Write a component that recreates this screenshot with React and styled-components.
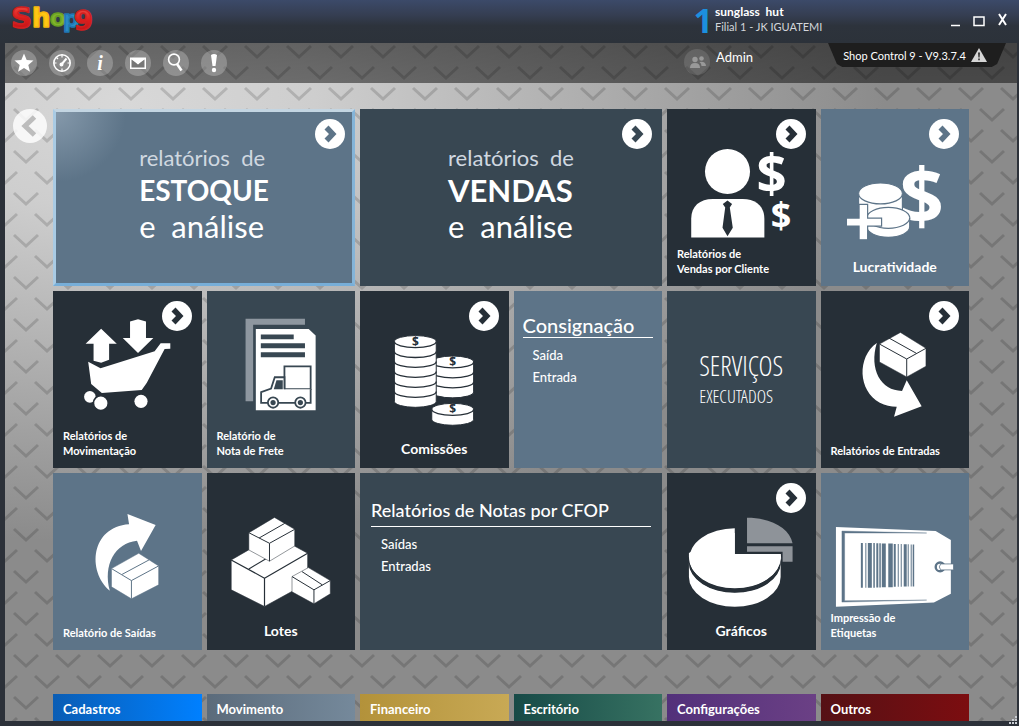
import React from "react";
import styled, { createGlobalStyle, css } from "styled-components";

const GlobalStyle = createGlobalStyle`
  * {
    box-sizing: border-box;
  }

  body {
    margin: 0;
    font-family: Lato, "Open Sans", sans-serif;
    font-size: 13px;
    color: #fff;
    background: #2c3139;
  }

  a {
    color: inherit;
    text-decoration: none;
  }

  button {
    font: inherit;
    color: inherit;
    border: 0;
    padding: 0;
    background: none;
    cursor: pointer;
  }
`;

const tones = {
  dark: "#262f37",
  slate: "#384752",
  blue: "#5d7488",
};

const Window = styled.div`
  position: relative;
  display: flex;
  flex-direction: column;
  min-height: 100vh;
  padding: 0 2px 5px 5px;
  background: #2c3139;
`;

const TitleBar = styled.header`
  display: flex;
  align-items: flex-start;
  height: 43px;
  margin: 0 -2px 0 -5px;
  padding: 4px 12px 0 10px;
  background: linear-gradient(#3c4a69, #353e52 35%, #2d333c 60%, #2c323a);
`;

const Logo = styled.a`
  flex: 1;
  height: 36px;

  svg {
    display: block;
    overflow: visible;
  }
`;

const Branch = styled.div`
  display: flex;
  width: 258px;
  gap: 2px;
`;

const BranchNumber = styled.span`
  width: 20px;
  font: bold 34px/32px "Open Sans", sans-serif;
  text-align: right;
  color: #1c8fdf;
`;

const BranchText = styled.div`
  font-size: 12px;
  line-height: 15px;
  white-space: pre;

  strong {
    display: block;
  }

  span {
    font-size: 11px;
    color: #d3d6db;
  }
`;

const WindowButtons = styled.div`
  display: flex;
  align-items: center;
  gap: 13px;
  height: 34px;
`;

const Desktop = styled.div`
  position: relative;
  flex: 1;
  display: flex;
  flex-direction: column;
  background: radial-gradient(
    760px 440px at 120px 60px,
    #d8d8d8,
    #cecece 25%,
    #a6a6a6 70%,
    #8b8b8b
  );
`;

const Chevrons = styled.svg`
  position: absolute;
  inset: 0;
  width: 100%;
  height: 100%;
`;

const Toolbar = styled.nav`
  position: relative;
  display: flex;
  height: 40px;
  padding-left: 6px;
  background: linear-gradient(rgba(0, 0, 0, 0.52), rgba(0, 0, 0, 0.48));
`;

const Tools = styled.div`
  flex: 1;
  display: flex;
  align-items: center;
  gap: 12px;
`;

const RoundButton = styled.button`
  width: 26px;
  height: 26px;
  border-radius: 50%;
  background: rgba(255, 255, 255, 0.24);

  svg {
    display: block;
  }
`;

const User = styled.div`
  display: flex;
  gap: 6px;
  width: 144px;
  padding-top: 6px;
  line-height: 16px;

  ${RoundButton} {
    background: rgba(255, 255, 255, 0.12);
  }
`;

const Version = styled.div`
  display: flex;
  align-items: center;
  justify-content: center;
  gap: 5px;
  width: 178px;
  height: 24px;
  margin-right: 11px;
  padding-right: 4px;
  font-size: 11px;
  background: #1e1e1e;
  clip-path: polygon(0 0, 100% 0, 95% 88%, 92% 100%, 8% 100%, 5% 88%);
`;

const Main = styled.main`
  position: relative;
  flex: 1;
  display: grid;
  grid-template-columns: 48px 1fr 48px;
  padding-top: 26px;
`;

const BackButton = styled.button`
  width: 34px;
  height: 34px;
  margin-left: 8px;
  border-radius: 50%;
  background: rgba(255, 255, 255, 0.82);

  svg {
    display: block;
  }
`;

const Content = styled.div`
  display: flex;
  flex-direction: column;
  justify-content: space-between;
  gap: 24px;
`;

const Grid = styled.div`
  display: grid;
  grid-template-columns: repeat(6, 1fr);
  grid-auto-rows: 177px;
  gap: 5px;
`;

const Tile = styled.section`
  position: relative;
  display: flex;
  flex-direction: column;
  grid-column: span ${(p) => p.$span || 1};
  color: ${(p) => tones[p.$tone]};
  background: ${(p) => tones[p.$tone]};

  ${(p) =>
    p.$selected &&
    css`
      border: 3px solid #77aed8;
      border-color: #c3d5e2 #84b4d8 #77aed8 #a9cbe4;
      background: radial-gradient(circle at 0 0, #8599ab, ${tones.blue} 70px);
    `}
`;

const NextButton = styled.button`
  position: absolute;
  top: ${(p) => (p.$inset ? 7 : 10)}px;
  right: ${(p) => (p.$inset ? 7 : 10)}px;
  width: 30px;
  height: 30px;
  border-radius: 50%;
  background: #fff;

  svg {
    display: block;
  }
`;

const Art = styled.svg`
  display: block;
  width: 100%;
  height: 137px;
  fill: #fff;
`;

const Label = styled.a`
  margin-top: auto;
  padding: 0 10px 10px;
  font-size: 11px;
  font-weight: bold;
  line-height: 15px;
  white-space: pre-line;
  color: #fff;

  ${(p) =>
    p.$big &&
    css`
      padding-bottom: 12px;
      font-size: 14px;
      text-align: center;
    `}
`;

const Headline = styled.a`
  align-self: center;
  margin: auto;
  padding-bottom: 8px;
  color: #fff;
  white-space: pre;

  span,
  strong {
    display: block;
    font-size: 31px;
    line-height: 37px;
  }

  strong {
    font-size: ${(p) => (p.$long ? 28 : 31)}px;
    line-height: 35px;
  }

  span:first-child {
    font-size: 22px;
    line-height: 30px;
    color: #d0d8e0;
  }
`;

const ListTile = styled.div`
  padding: ${(p) => (p.$wide ? "25px 11px" : "22px 9px")};
  color: #fff;

  h2 {
    margin: 0 0 6px;
    padding-bottom: ${(p) => (p.$wide ? 4 : 0)}px;
    font-size: ${(p) => (p.$wide ? 18 : 20)}px;
    font-weight: 500;
    line-height: 24px;
    border-bottom: 1px solid #fff;
  }

  ul {
    margin: 0;
    padding: 0 0 0 10px;
    list-style: none;
  }

  li {
    font-size: 13px;
    font-weight: 500;
    line-height: 22px;
  }
`;

const Services = styled.a`
  margin: auto;
  font-family: "Open Sans Condensed Light", "Open Sans Condensed",
    "Liberation Sans Narrow", "DejaVu Sans Condensed", sans-serif;
  font-weight: 300;
  color: #fff;

  span {
    display: block;
    font-size: 27px;
    line-height: 32px;
  }

  span + span {
    font-size: 18px;
    line-height: 28px;
  }
`;

const Menu = styled.nav`
  display: grid;
  grid-template-columns: repeat(6, 1fr);
  gap: 5px;
`;

const MenuItem = styled.a`
  height: 27px;
  padding-left: 10px;
  font-size: 13px;
  font-weight: bold;
  line-height: 30px;
  background: linear-gradient(90deg, ${(p) => p.$from}, ${(p) => p.$to});
`;

const Grip = styled.svg`
  position: absolute;
  right: 1px;
  bottom: 1px;
  fill: #c8ccd2;
`;

function Arrow({ inset, label }) {
  return (
    <NextButton $inset={inset} aria-label={label}>
      <svg width="30" height="30" viewBox="0 0 30 30">
        <path d="M9.5 10.5 L13.5 6.5 L21.5 15 L13.5 23.5 L9.5 19.5 L14 15Z" fill="currentColor" />
      </svg>
    </NextButton>
  );
}

// lid corners, then the three lower corners from left to right
function Box({ top, right, front, left, base, tape, width = 1 }) {
  const p = (pt) => pt.join(" ");
  return (
    <g fill="#fff" stroke="currentColor" strokeWidth={width} strokeLinejoin="round">
      <path d={`M${p(top)}L${p(right)}L${p(base[2])}L${p(base[1])}L${p(base[0])}L${p(left)}Z`} strokeWidth={width / 2} />
      <path d={`M${p(left)}L${p(front)}L${p(right)}M${p(front)}L${p(base[1])}`} fill="none" />
      <path d={`M${p(tape[0])}L${p(tape[1])}`} />
    </g>
  );
}

function Stack({ x, y, coins }) {
  const rx = 21;
  const ry = 6;
  const step = 10;
  const seams = Array.from({ length: coins }, (_, i) => y + i * step);
  return (
    <g>
      <path
        d={`M${x - rx} ${y} A${rx} ${ry} 0 0 1 ${x + rx} ${y} V${y + coins * step} A${rx} ${ry} 0 0 1 ${x - rx} ${y + coins * step}Z`}
        stroke="currentColor"
        strokeWidth="1"
      />
      {seams.map((s) => (
        <path key={s} d={`M${x - rx} ${s} A${rx} ${ry} 0 0 0 ${x + rx} ${s}`} fill="none" stroke="currentColor" strokeWidth="1.3" />
      ))}
      <text x={x} y={y + 4} textAnchor="middle" fontFamily="Open Sans" fontWeight="bold" fontSize="12" fill="currentColor">
        $
      </text>
    </g>
  );
}

function Dollar({ x, y, size }) {
  return (
    <text x={x} y={y} textAnchor="middle" fontFamily="Open Sans" fontWeight="bold" fontSize={size}>
      $
    </text>
  );
}

const art = {
  client: (
    <>
      <circle cx="60.7" cy="62.5" r="22.6" />
      <path d="M24.3 128.7 V110 C24.3 97 33 90 46 90 H76 C89 90 97.7 97 97.7 110 V128.7Z" />
      <path d="M60.7 91.5 L65.3 95 L63 98.6 L66 119 L60.7 127.5 L55.7 119 L58.4 98.6 L56 95Z" fill="currentColor" />
      <Dollar x={105} y={84} size={53} />
      <Dollar x={114.3} y={119} size={36} />
    </>
  ),
  profit: (
    <>
      <Dollar x={101} y={115} size={78} />
      <g stroke="currentColor" strokeWidth="1.2">
        <path d="M37.7 84.5 A22 10.5 0 0 1 81.7 84.5 V100 A22 10.5 0 0 1 37.7 100Z" />
        <path d="M37.7 84.5 A22 10.5 0 0 0 81.7 84.5" />
        <path d="M46 109 A21.5 10.5 0 0 1 89 109 V118 A21.5 10.5 0 0 1 46 118Z" />
        <path d="M46 109 A21.5 10.5 0 0 0 89 109" />
        <path d="M38.2 95.500 H46.8 V109.2 H60.8 V117.2 H46.8 V131 H38.2 V117.2 H25.500 V109.2 H38.2Z" />
      </g>
    </>
  ),
  cart: (
    <>
      <path d="M48.3 37.7 L64 52.7 H56.3 V68.7 L48.3 71.7 L40.7 69.7 V52.7 H32.7Z" />
      <path d="M85.3 28 L93.3 30.3 V47 H100.7 L85.3 62 L70 47 H77.3 V30.3Z" />
      <path d="M35.3 70.7 L47.7 77.3 L102 60.3 L108 52.3 H117.7 V57.7 L112 58 L94 92 L89 99 L49 102 L38.3 93Z" />
      <circle cx="37" cy="106" r="5.8" />
      <circle cx="48" cy="112.3" r="7.4" stroke="currentColor" strokeWidth="1.6" />
      <circle cx="88.3" cy="110.5" r="6.6" />
    </>
  ),
  freight: (
    <>
      <path d="M38.7 27.7 H98.3 V33.7 H46.3 V110.3 H38.7Z" fill="#8e97a0" />
      <path d="M49 38 H102 L109 44.5 V119.3 H49Z" />
      <path d="M54 43.3h33v5h-33z M54 52.3h44.3v5h-44.3z M54 61.2h44.3v5h-44.3z" fill="currentColor" />
      <g stroke="currentColor" strokeWidth="1.8">
        <path d="M77.7 75.3 H104 V98.3 H77.7Z" />
        <path d="M77.7 98.3 V86.3 H68 L64.3 97.7 L54.3 101.3 V112 H104 V98.3" />
        <circle cx="66.3" cy="111.7" r="5.2" />
        <circle cx="93.7" cy="111.7" r="5.2" />
      </g>
      <path d="M69.7 89.3 H76 V98.3 H67Z" fill="currentColor" />
      <circle cx="66.3" cy="111.7" r="2.6" fill="currentColor" />
      <circle cx="93.7" cy="111.7" r="2.6" fill="currentColor" />
    </>
  ),
  coins: (
    <>
      <Stack x={93} y={71} coins={3} />
      <Stack x={55.5} y={50.5} coins={6} />
      <Stack x={93} y={118.5} coins={1} />
    </>
  ),
  inbound: (
    <>
      <path d="M56 52 C36 66 37 100 59 112 Q67 116 76 116 L73.3 126 L101 115.3 L86 89.3 L81.3 100 C60 100 48 78 56 52Z" />
      <Box
        top={[79.7, 41.3]}
        right={[105.3, 57.3]}
        front={[86, 68]}
        left={[58.7, 53]}
        base={[[58.7, 71], [86, 86], [105.3, 75.3]]}
        tape={[[68.3, 47], [95.7, 62.3]]}
      />
    </>
  ),
  outbound: (
    <>
      <path d="M57 118 C34 98 38 54 76.3 51.3 L74.7 41 L103 52 L88.3 78 L84.3 67.7 C62 70 50 92 57 118Z" />
      <Box
        top={[86, 80.3]}
        right={[106, 93]}
        front={[78.7, 107.7]}
        left={[58.7, 95.7]}
        base={[[58.7, 114], [78.7, 126], [106, 112]]}
        tape={[[69.3, 101.5], [96.3, 87]]}
      />
    </>
  ),
  lots: (
    <>
      <Box
        top={[67.6, 62]}
        right={[101, 80.3]}
        front={[57.7, 105.3]}
        left={[24.3, 87]}
        base={[[24.3, 117], [57.7, 133.7], [101, 110]]}
        tape={[[42, 96], [84, 71]]}
        width={1.2}
      />
      <Box
        top={[67.7, 44.3]}
        right={[88, 56.3]}
        front={[62.7, 70.3]}
        left={[42, 59.7]}
        base={[[42, 77], [62.7, 88.3], [88, 73]]}
        tape={[[52.3, 65], [78, 50.3]]}
      />
      <Box
        top={[101.7, 94.7]}
        right={[123.7, 107.7]}
        front={[107.3, 117]}
        left={[85.3, 103.7]}
        base={[[85.3, 119], [107.3, 131], [123.7, 121]]}
        tape={[[95.3, 98.7], [115.7, 112]]}
      />
    </>
  ),
  pie: (
    <>
      <path d="M68 55.3 A46 30 0 1 0 114 81 H68Z" />
      <path d="M22 90 A46 30 0 0 0 114 90 V104 A46 30 0 0 1 22 104Z" />
      <path d="M22 85 A46 30 0 0 0 114 85 V89 A46 30.5 0 0 1 22 89Z" fill="currentColor" />
      <path d="M22 84 A46 31.5 0 0 0 114 84 V81 H68 V60 H60 L22 80Z" />
      <path d="M80.3 44.7 C104 44.7 123 55 126 70.3 H80.3Z M80.3 73.3 H126 V88.7 H116 V78.7 H80.3Z" fill="#8e9399" />
    </>
  ),
  tag: (
    <>
      <path d="M15 54 L115 58 L130.3 67 V121 L113.3 129.7 L15 134Z" />
      <path d="M21 58 L106 60 L23.7 60 V128 L106 127.3 L21 129.3Z" fill="currentColor" stroke="currentColor" strokeWidth="0.4" />
      <path
        d="M40 70h2v45h-2z M44.5 70h1v45h-1z M47 70h4v45h-4z M52.5 70h1.5v45h-1.5z M55.5 70.3h2v44.4h-2z M58.5 70.3h1.5v44.4h-1.5z M61 70.5h4v44h-4z M67.5 70.5h4.5v44h-4.5z M73 71h2v43h-2z M77 71h1v43h-1z M80 71h1v43h-1z M83 71.3h3v42.4h-3z M87 71.3h1v42.4h-1z M90 71.6h1v42h-1z M92 71.6h1.5v42h-1.5z"
        fill="currentColor"
      />
      <circle cx="119.5" cy="94" r="4.4" stroke="currentColor" strokeWidth="2.4" />
      <path d="M120 91 H133 V97 H120 Q117.5 94 120 91Z" stroke="currentColor" strokeWidth="0.8" />
    </>
  ),
};

function ArtTile({ tone, icon, label, big, next }) {
  return (
    <Tile $tone={tone}>
      <Art viewBox="0 0 149 137" aria-hidden="true">
        {art[icon]}
      </Art>
      {next && <Arrow label={label} />}
      <Label href="#" $big={big}>
        {label}
      </Label>
    </Tile>
  );
}

function HeadlineTile({ tone, title, selected }) {
  return (
    <Tile $tone={tone} $span={2} $selected={selected}>
      <Headline href="#" $long={title.length > 6}>
        <span>{"relatórios  de"}</span>
        <strong>{title}</strong>
        <span>{"e  análise"}</span>
      </Headline>
      <Arrow inset={selected} label={title} />
    </Tile>
  );
}

function LinksTile({ tone, title, links, span }) {
  return (
    <Tile $tone={tone} $span={span}>
      <ListTile $wide={span > 1}>
        <h2>{title}</h2>
        <ul>
          {links.map((link) => (
            <li key={link}>
              <a href="#">{link}</a>
            </li>
          ))}
        </ul>
      </ListTile>
    </Tile>
  );
}

const tools = [
  ["Favoritos", <path d="M13 3.5 L15.7 10 L22.5 10.5 L17.3 15 L19 21.7 L13 18 L7 21.7 L8.7 15 L3.5 10.5 L10.3 10Z" fill="#fff" />],
  [
    "Painel",
    <g fill="none" stroke="#fff" strokeWidth="1.6">
      <circle cx="13" cy="13" r="8.2" />
      <path d="M13 5v2.5M13 18.5v2.5M5 13h2.5M18.5 13h2.5M7.5 7.5l1.5 1.5" strokeWidth="1.2" />
      <path d="M12 15 L17.5 8.5" strokeWidth="2" />
      <circle cx="12.5" cy="14.5" r="1.2" />
    </g>,
  ],
  [
    "Informações",
    <text x="13" y="20" textAnchor="middle" fontFamily="Liberation Serif" fontStyle="italic" fontWeight="bold" fontSize="20" fill="#fff">
      i
    </text>,
  ],
  [
    "Mensagens",
    <g>
      <path d="M5 7.5h16v11.5h-16z" fill="#fff" />
      <path d="M6.5 9.5 L10 12 L13 14.5 L16 12 L19.5 9.5 V17.5 H6.5Z" fill="#777" />
      <path d="M6 8 H20 L13 14Z" fill="#fff" />
    </g>,
  ],
  [
    "Pesquisar",
    <g fill="none" stroke="#fff">
      <circle cx="11" cy="9.5" r="5.4" strokeWidth="1.6" />
      <path d="M14 14 L18.5 20.5" strokeWidth="2.6" />
    </g>,
  ],
  [
    "Alertas",
    <g fill="#fff">
      <path d="M10 5 Q13 3 16 5 L14.5 16 H11.5Z" />
      <circle cx="13" cy="20" r="2.2" />
    </g>,
  ],
];

const menu = [
  ["Cadastros", "#0a5db4", "#0080ff"],
  ["Movimento", "#5b6b7b", "#75899b"],
  ["Financeiro", "#b3923a", "#c8a955"],
  ["Escritório", "#174a47", "#377262"],
  ["Configurações", "#52307a", "#6b4085"],
  ["Outros", "#551115", "#7c0d10"],
];

export default function App() {
  return (
    <Window>
      <GlobalStyle />
      <TitleBar>
        <Logo href="#" aria-label="Shop9">
          <svg width="90" height="36" viewBox="0 0 90 36">
            <defs>
              <linearGradient id="red" x2="0" y2="1">
                <stop offset="0" stopColor="#f4564a" />
                <stop offset="0.5" stopColor="#dc1d1d" />
                <stop offset="1" stopColor="#b80f14" />
              </linearGradient>
            </defs>
            <g fontFamily="DejaVu Sans" fontWeight="bold" strokeWidth="1.6" strokeLinejoin="round">
              <text x="1" y="24" fontSize="29" fill="url(#red)" stroke="#d02020">S</text>
              <text x="22" y="23" fontSize="26" fill="#ffc814" stroke="#f9b80e">h</text>
              <text x="40" y="22" fontSize="23" fill="#7fb32b" stroke="#6aa022">o</text>
              <text x="53" y="23" fontSize="23" fill="#2a8bc6" stroke="#1f78b4">p</text>
              <text x="64" y="26" fontSize="27" fill="url(#red)" stroke="#d02020">9</text>
            </g>
          </svg>
        </Logo>
        <Branch>
          <BranchNumber>1</BranchNumber>
          <BranchText>
            <strong>{"sunglass  hut"}</strong>
            <span>Filial 1 - JK IGUATEMI</span>
          </BranchText>
        </Branch>
        <WindowButtons>
          <button aria-label="Minimizar">
            <svg width="9" height="14"><path d="M0 12.5h9" stroke="#fff" strokeWidth="1.5" /></svg>
          </button>
          <button aria-label="Maximizar">
            <svg width="12" height="14"><path d="M1 4h10v8.5H1z" fill="none" stroke="#fff" strokeWidth="1.5" /></svg>
          </button>
          <button aria-label="Fechar">
            <svg width="9" height="14"><path d="M1 1 L8 12 M8 1 L1 12" stroke="#fff" strokeWidth="2" /></svg>
          </button>
        </WindowButtons>
      </TitleBar>

      <Desktop>
        <Chevrons aria-hidden="true">
          <defs>
            <pattern id="chevrons" x="0" y="-2" width="42" height="42" patternUnits="userSpaceOnUse">
              <path
                d="M9 26 L21 37 L33 26 M-12 5 L0 16 L12 5 M30 5 L42 16 L54 5"
                fill="none"
                stroke="#000"
                strokeOpacity="0.15"
                strokeWidth="3"
              />
            </pattern>
          </defs>
          <rect width="100%" height="100%" fill="url(#chevrons)" />
        </Chevrons>

        <Toolbar>
          <Tools>
            {tools.map(([name, icon]) => (
              <RoundButton key={name} aria-label={name}>
                <svg width="26" height="26" viewBox="0 0 26 26">{icon}</svg>
              </RoundButton>
            ))}
          </Tools>
          <User>
            <RoundButton aria-label="Usuários">
              <svg width="26" height="26" viewBox="0 0 26 26" fill="#999">
                <circle cx="11" cy="10.5" r="2.7" />
                <path d="M6 19 Q6 14 11 14 Q16 14 16 19Z" />
                <circle cx="17.5" cy="9.5" r="2.3" />
                <path d="M15.5 13 Q21.5 12 22 17 H17.5 Q17.5 14.5 15.5 13Z" />
              </svg>
            </RoundButton>
            Admin
          </User>
          <Version>
            Shop Control 9 - V9.3.7.4
            <svg width="16" height="14" viewBox="0 0 16 14">
              <path d="M8 0 L16 14 H0Z" fill="#d6d6d6" />
              <path d="M7 4.5h2l-.4 5h-1.2z M7.2 10.5h1.6v1.7h-1.6z" fill="#333" />
            </svg>
          </Version>
        </Toolbar>

        <Main>
          <BackButton aria-label="Voltar">
            <svg width="34" height="34" viewBox="0 0 34 34">
              <path d="M21.5 8 L12 17 L21.5 26" fill="none" stroke="#bdbdbd" strokeWidth="5" />
            </svg>
          </BackButton>
          <Content>
            <Grid>
              <HeadlineTile tone="blue" title="ESTOQUE" selected />
              <HeadlineTile tone="slate" title="VENDAS" />
              <ArtTile tone="dark" icon="client" label={"Relatórios de\nVendas por Cliente"} next />
              <ArtTile tone="blue" icon="profit" label="Lucratividade" big next />

              <ArtTile tone="dark" icon="cart" label={"Relatórios de\nMovimentação"} next />
              <ArtTile tone="slate" icon="freight" label={"Relatório de\nNota de Frete"} />
              <ArtTile tone="dark" icon="coins" label="Comissões" big next />
              <LinksTile tone="blue" title="Consignação" links={["Saída", "Entrada"]} />
              <Tile $tone="slate">
                <Services href="#">
                  <span>SERVIÇOS</span>
                  <span>EXECUTADOS</span>
                </Services>
              </Tile>
              <ArtTile tone="dark" icon="inbound" label="Relatórios de Entradas" next />

              <ArtTile tone="blue" icon="outbound" label="Relatório de Saídas" />
              <ArtTile tone="dark" icon="lots" label="Lotes" big />
              <LinksTile tone="slate" title="Relatórios de Notas por CFOP" links={["Saídas", "Entradas"]} span={2} />
              <ArtTile tone="dark" icon="pie" label="Gráficos" big next />
              <ArtTile tone="blue" icon="tag" label={"Impressão de\nEtiquetas"} />
            </Grid>
            <Menu>
              {menu.map(([name, from, to]) => (
                <MenuItem key={name} href="#" $from={from} $to={to}>
                  {name}
                </MenuItem>
              ))}
            </Menu>
          </Content>
        </Main>
      </Desktop>
      <Grip width="9" height="9" aria-hidden="true">
        <path d="M6 0h2v2h-2z M3 3h2v2h-2z M6 3h2v2h-2z M0 6h2v2h-2z M3 6h2v2h-2z M6 6h2v2h-2z" />
      </Grip>
    </Window>
  );
}
